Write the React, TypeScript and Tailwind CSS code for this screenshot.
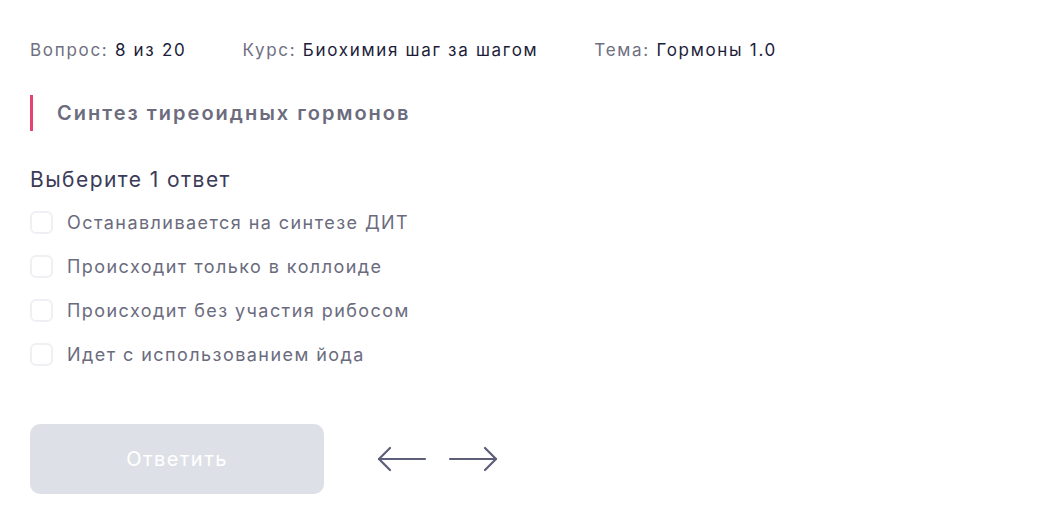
import React, { useState } from 'react';

const answers = [
    'Останавливается на синтезе ДИТ',
    'Происходит только в коллоиде',
    'Происходит без участия рибосом',
    'Идет с использованием йода',
];

const Arrow = ({ dir }: { dir: 'left' | 'right' }) => (
    <svg width="50" height="26" viewBox="0 0 50 26" fill="none" stroke="#5d5e78" strokeWidth="2.2" strokeLinecap="round" strokeLinejoin="round">
        {dir === 'left' ? (
            <>
                <path d="M2 13H48" />
                <path d="M13 2L2 13L13 24" />
            </>
        ) : (
            <>
                <path d="M2 13H48" />
                <path d="M37 2L48 13L37 24" />
            </>
        )}
    </svg>
);

const App: React.FC = () => {
    const [selected, setSelected] = useState<number | null>(null);

    return (
        <div className="bg-white w-[1052px] h-[505px] pl-[30px] pt-[36px] font-['Inter',sans-serif] tracking-[0.09em]">
            {/* meta row */}
            <div className="flex items-center text-[17px] leading-[28px] text-[#6f6f82] tracking-[0.1em]">
                <span className="mr-[56px]">Вопрос: <span className="text-[#1d1d3a]">8 из 20</span></span>
                <span className="mr-[56px]">Курс: <span className="text-[#1d1d3a]">Биохимия шаг за шагом</span></span>
                <span>Тема: <span className="text-[#1d1d3a]">Гормоны 1.0</span></span>
            </div>

            <div className="mt-[31px] flex items-center border-l-[3px] border-[#e8436e] h-[36px] pl-[24px]">
                <h2 className="text-[20px] font-semibold text-[#6c6c7e] tracking-[0.1em]">Синтез тиреоидных гормонов</h2>
            </div>

            <div className="mt-[35px] text-[21px] leading-[28px] text-[#3b3b58]">Выберите 1 ответ</div>

            <ul className="mt-[6px] flex flex-col">
                {answers.map((a, i) => (
                    <li key={a} className="flex items-center h-[44px] cursor-pointer" onClick={() => setSelected(i)}>
                        <span className={`w-[23px] h-[23px] rounded-[6px] border-2 ${selected === i ? 'border-[#e8436e]' : 'border-[#eef0f3]'}`} />
                        <span className="ml-[14px] text-[18px] text-[#6b6b7e]">{a}</span>
                    </li>
                ))}
            </ul>

            <div className="mt-[48px] flex items-center">
                <button className="w-[294px] h-[70px] rounded-[10px] bg-[#dde1e7] text-white text-[20px]">Ответить</button>
                <div className="ml-[53px] flex items-center gap-[21px]">
                    <Arrow dir="left" />
                    <Arrow dir="right" />
                </div>
            </div>
        </div>
    );
};

export default App;
